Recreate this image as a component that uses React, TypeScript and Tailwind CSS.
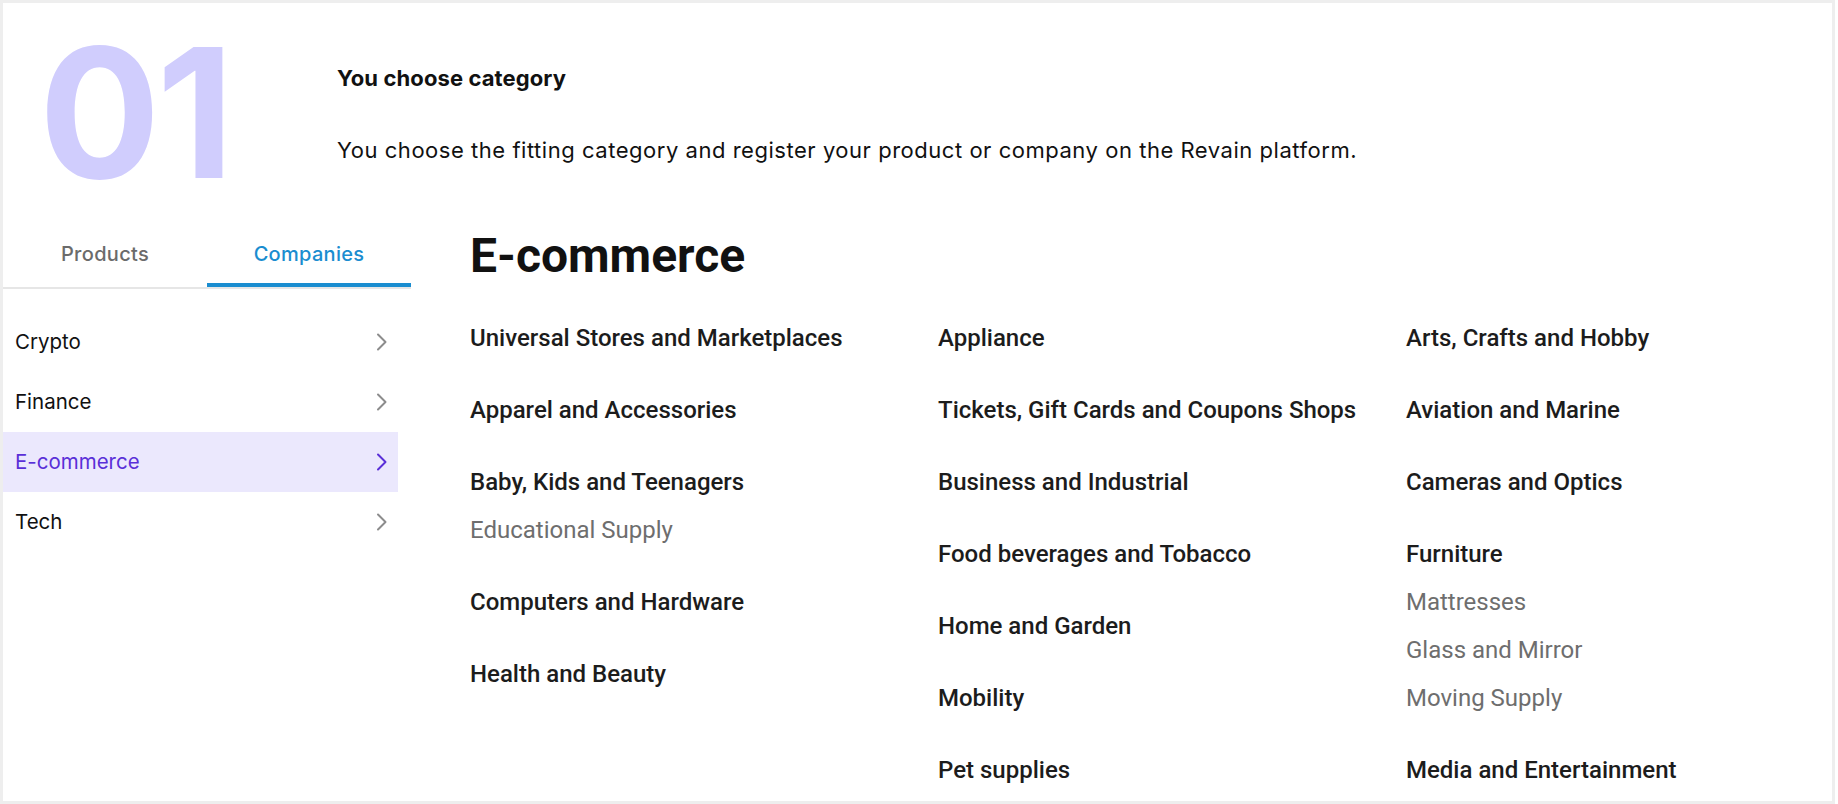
import React from "react";

type Group = { title: string; subs?: string[] };

const columns: Group[][] = [
  [
    { title: "Universal Stores and Marketplaces" },
    { title: "Apparel and Accessories" },
    { title: "Baby, Kids and Teenagers", subs: ["Educational Supply"] },
    { title: "Computers and Hardware" },
    { title: "Health and Beauty" },
  ],
  [
    { title: "Appliance" },
    { title: "Tickets, Gift Cards and Coupons Shops" },
    { title: "Business and Industrial" },
    { title: "Food beverages and Tobacco" },
    { title: "Home and Garden" },
    { title: "Mobility" },
    { title: "Pet supplies" },
  ],
  [
    { title: "Arts, Crafts and Hobby" },
    { title: "Aviation and Marine" },
    { title: "Cameras and Optics" },
    { title: "Furniture", subs: ["Mattresses", "Glass and Mirror", "Moving Supply"] },
    { title: "Media and Entertainment" },
  ],
];

const menu = ["Crypto", "Finance", "E-commerce", "Tech"];

function Chevron({ active }: { active: boolean }) {
  return (
    <svg width="12" height="18" viewBox="0 0 12 18" fill="none">
      <path
        d="M2 1.5 L9.5 9 L2 16.5"
        stroke={active ? "#5a2fd8" : "#8c8c8c"}
        strokeWidth="2"
        strokeLinecap="round"
        strokeLinejoin="round"
      />
    </svg>
  );
}

export default function App() {
  return (
    <div className="w-[1835px] h-[804px] border-[3px] border-[#eeeeee] bg-white overflow-hidden font-['Inter',sans-serif]">
      {/* top */}
      <div className="flex h-[218px] pt-[20px]">
        <div className="w-[334px] pl-[36px]">
          <div className="text-[180px] leading-[180px] font-bold text-[#d0cdfd] tracking-[-4px]">01</div>
        </div>
        <div className="pt-[41px]">
          <div className="text-[22px] leading-[28px] font-bold text-[#111] tracking-[0.1px]">You choose category</div>
          <div className="mt-[44px] text-[22px] leading-[28px] text-[#111] tracking-[0.53px]">
            You choose the fitting category and register your product or company on the Revain platform.
          </div>
        </div>
      </div>

      {/* body */}
      <div className="flex">
        <div className="w-[408px] shrink-0">
          <div className="flex h-[68px] border-b-2 border-[#e6e6e6]">
            <div className="flex-1 flex items-center justify-center text-[20px] font-medium text-[#6b6b6b] tracking-[0.3px]">
              Products
            </div>
            <div className="relative flex-1 flex items-center justify-center text-[20px] font-medium text-[#1a8dd0] tracking-[0.3px]">
              Companies
              <div className="absolute left-0 right-0 bottom-0 h-[4px] bg-[#1a8dd0]" />
            </div>
          </div>
          <div className="mt-[23px] pr-[13px]">
            {menu.map((m) => {
              const active = m === "E-commerce";
              return (
                <div
                  key={m}
                  className={
                    "h-[60px] flex items-center justify-between pl-[12px] pr-[10px] text-[20.5px] " +
                    (active ? "bg-[#ebe8fd] text-[#5a2fd8]" : "text-[#111]")
                  }
                >
                  <span>{m}</span>
                  <Chevron active={active} />
                </div>
              );
            })}
          </div>
        </div>

        <div className="ml-[59px] font-['Roboto',sans-serif]">
          <div className="text-[48px] leading-[56px] font-bold text-[#111] mt-[7px]">E-commerce</div>
          <div className="mt-[30px] grid grid-cols-[436px_436px_436px] gap-x-[32px]">
            {columns.map((col, i) => (
              <div key={i} className="flex flex-col gap-[24px]">
                {col.map((g) => (
                  <div key={g.title} className="flex flex-col">
                    <div className="h-[48px] leading-[48px] text-[24px] font-medium text-[#1c1c1c] whitespace-nowrap">
                      {g.title}
                    </div>
                    {g.subs?.map((s) => (
                      <div key={s} className="h-[48px] leading-[48px] text-[24px] text-[#6e6e6e] whitespace-nowrap">
                        {s}
                      </div>
                    ))}
                  </div>
                ))}
              </div>
            ))}
          </div>
        </div>
      </div>
    </div>
  );
}
